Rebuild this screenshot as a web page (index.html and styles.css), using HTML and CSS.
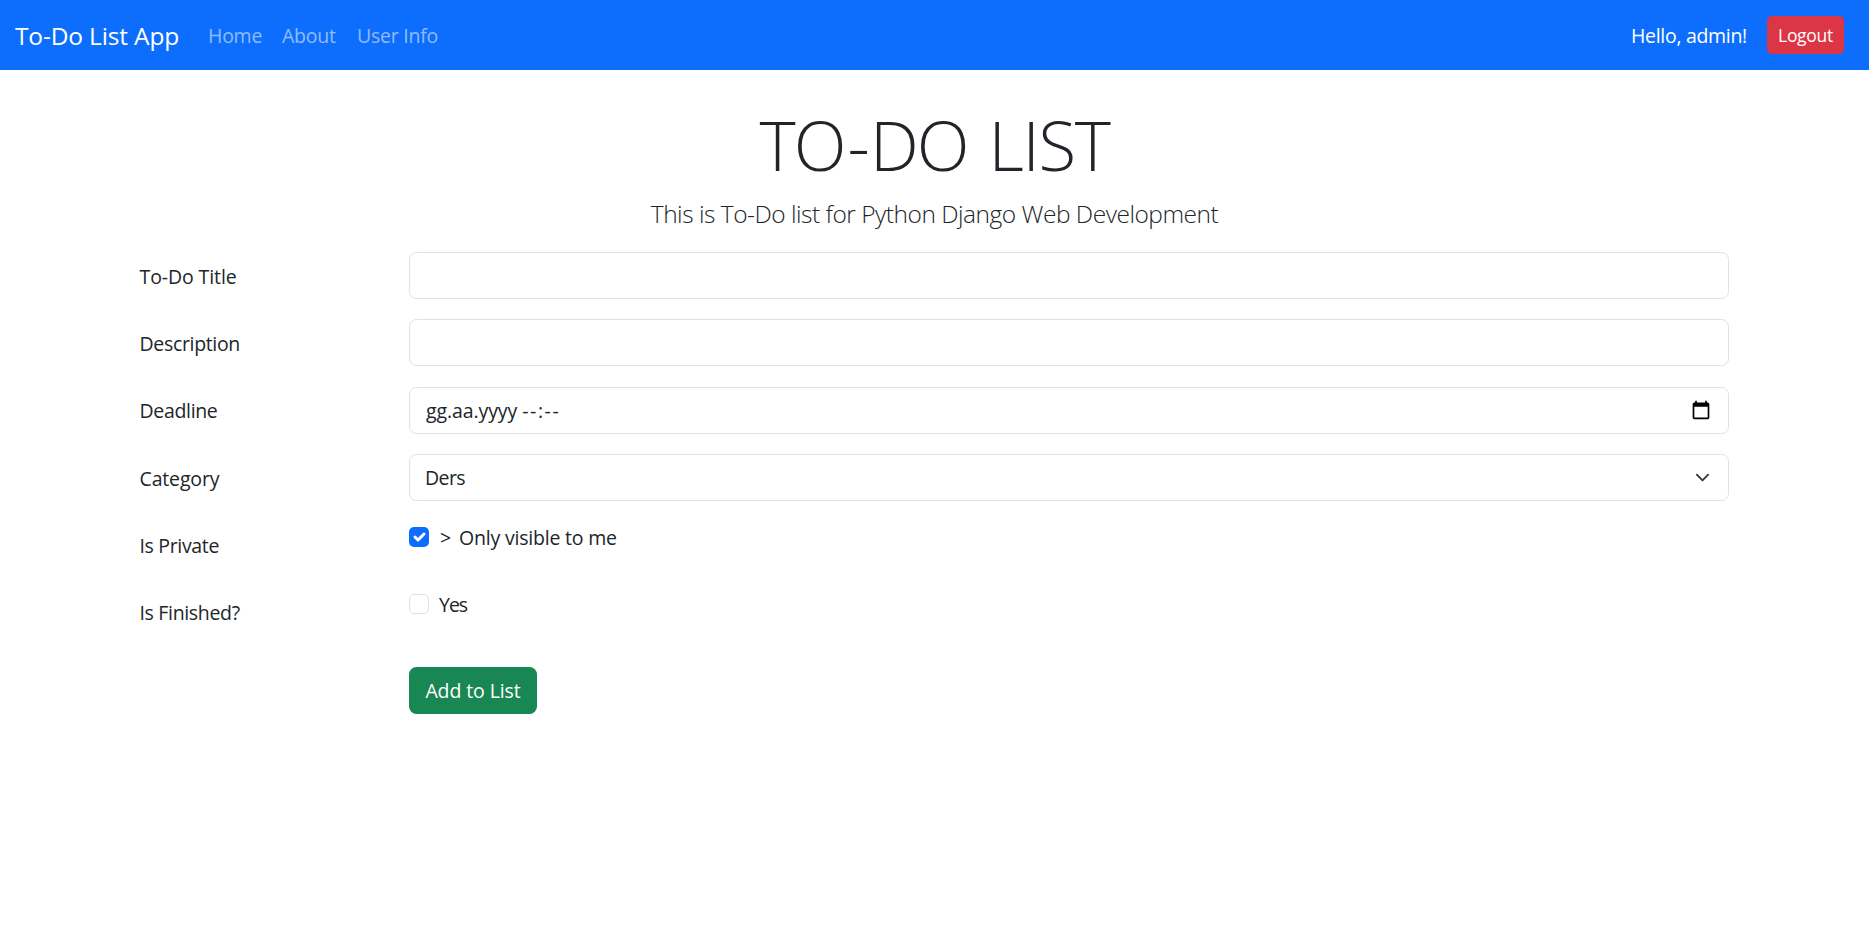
FILE: index.html
```html
<!DOCTYPE html>
<html lang="en">
<head>
<meta charset="utf-8">
<title>To-Do List App</title>
<link rel="stylesheet" href="styles.css">
</head>
<body>
<nav class="navbar">
  <a class="brand">To-Do List App</a>
  <div class="links"><a class="link-home">Home</a><a class="link-about">About</a><a class="link-user">User Info</a></div>
  <span class="hello">Hello, admin!</span>
  <button class="logout" type="button"><span>Logout</span></button>
</nav>
<main class="container">
  <h1 class="title">TO<span class="dash">-</span>DO <span class="list">LIST</span></h1>
  <p class="lead"><span>This is To-Do list for Python Django Web Development</span></p>
  <form class="form">
    <div class="row"><label class="label l-title"><span>To-Do Title</span></label><div class="control"></div></div>
    <div class="row"><label class="label l-desc"><span>Description</span></label><div class="control"></div></div>
    <div class="row"><label class="label l-dead"><span>Deadline</span></label>
      <div class="control"><span class="date">gg.aa.yyyy <span class="time">--:--</span></span>
        <svg class="calendar" width="20" height="20" viewBox="0 0 24 24"><path d="M20 3h-1V1h-2v2H7V1H5v2H4c-1.100 0-2 .9-2 2v16c0 1.100.9 2 2 2h16c1.100 0 2-.9 2-2V5c0-1.100-.9-2-2-2zm0 18H4V8h16v13z"/></svg>
      </div></div>
    <div class="row"><label class="label l-cat"><span>Category</span></label>
      <div class="control"><span class="ders">Ders</span>
        <svg class="chevron" width="15" height="15" viewBox="0 0 16 16"><path fill="none" stroke="#343a40" stroke-linecap="round" stroke-linejoin="round" stroke-width="2" d="m2 5 6 6 6-6"/></svg>
      </div></div>
    <div class="row"><label class="label l-priv"><span>Is Private</span></label>
      <div class="check"><span class="box checked"><svg width="20" height="20" viewBox="0 0 20 20"><path fill="none" stroke="#fff" stroke-linecap="round" stroke-linejoin="round" stroke-width="3" d="m6 10 3 3 6-6"/></svg></span><span class="gt">&gt;</span><span class="only">Only visible to me</span></div></div>
    <div class="row"><label class="label l-fin"><span>Is Finished?</span></label>
      <div class="check"><span class="box"></span><span class="yes">Yes</span></div></div>
    <button class="submit" type="button"><span>Add to List</span></button>
  </form>
</main>
</body>
</html>
```
FILE: styles.css
```css
* { box-sizing: border-box; }
body {
  margin: 0;
  background: #fff;
  color: #212529;
  font: 400 19.5px/30px "Open Sans", sans-serif;
  white-space: nowrap;
}
button { font: inherit; color: #fff; border: 0; text-align: center; }
.navbar {
  display: flex;
  align-items: center;
  height: 70px;
  padding: 2px 25px 0 15px;
  background: #0d6efd;
  color: #fff;
}
.brand { width: 193px; font-size: 24.500px; letter-spacing: -.15px; }
.links { display: flex; flex: 1; color: rgba(255, 255, 255, .55); letter-spacing: -.25px; }
.link-home { width: 74px; }
.link-about { width: 75px; }
.hello { width: 136px; letter-spacing: -.3px; }
.logout {
  width: 77px;
  height: 38px;
  margin-top: -2px;
  padding: 0;
  border-radius: 5px;
  background: #dc3545;
  font-size: 17.500px;
  letter-spacing: -.3px;
}
.container { width: 1650px; margin: 0 auto; padding: 27px 15px 0; }
.title { margin: 0 0 7px; text-align: center; font-size: 69px; line-height: 95px; font-weight: 300; letter-spacing: -1.900px; word-spacing: 5px; }
.dash { margin: 0 2px 0 3px; }
.list { letter-spacing: -1.400px; }
.lead { margin: 0; height: 53px; text-align: center; font-size: 24.500px; font-weight: 300; letter-spacing: -.49px; }
.form { padding: 0 16px 0 15px; }
.row { display: flex; height: 67.400px; }
.label { width: 269.500px; padding-top: 9.500px; letter-spacing: -.33px; }
.l-title { letter-spacing: -.1px; }
.l-cat { letter-spacing: -.15px; }
.control {
  display: flex;
  align-items: center;
  justify-content: space-between;
  flex: 1;
  height: 47px;
  padding: 1px 18px 0 16px;
  border: 1px solid #dee2e6;
  border-radius: 7.500px;
}
.date { letter-spacing: -.1px; }
.time { letter-spacing: 1.600px; }
.ders { margin-left: -1px; letter-spacing: -.6px; }
.calendar { margin: -2px -1px 0 0; }
.chevron { margin-top: -1px; }
.check { display: flex; padding-top: 5px; line-height: 22px; letter-spacing: -.2px; }
.box { width: 20px; height: 20px; margin-right: 11px; border: 1px solid #dee2e6; border-radius: 5px; }
.checked { display: flex; border: 0; background: #0d6efd; }
.gt { width: 19px; }
.yes { margin-left: -1px; letter-spacing: -1px; }
.submit { display: block; width: 128px; height: 47px; margin: 10.500px 0 0 269.500px; padding: 1px 0 0; border-radius: 7.500px; background: #198754; letter-spacing: -.1px; }
```
